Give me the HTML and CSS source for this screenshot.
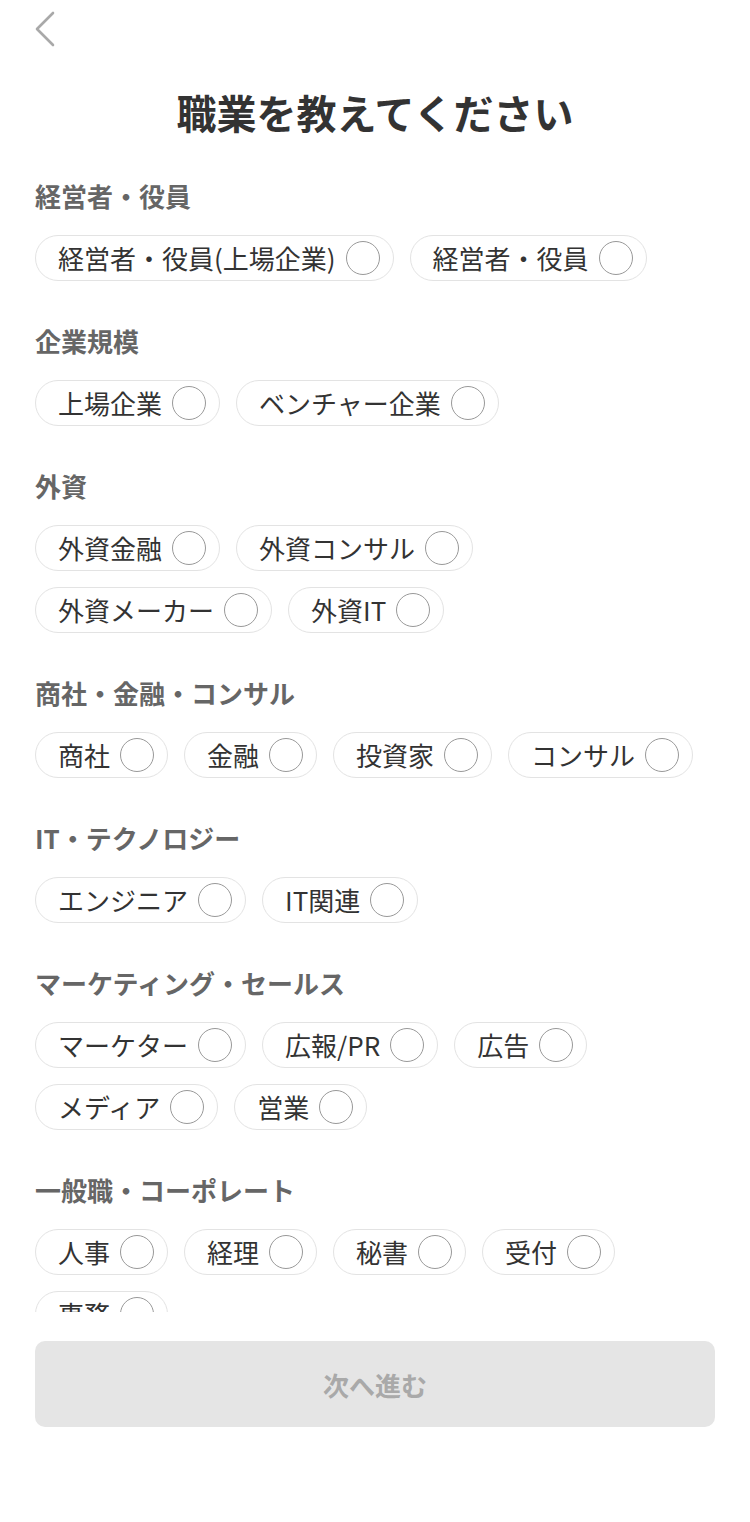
FILE: index.html
```html
<!DOCTYPE html>
<html lang="ja">
<head>
<meta charset="utf-8">
<title>職業を教えてください</title>
<link rel="stylesheet" href="styles.css">
</head>
<body>
<div class="page">
  <header class="topbar">
    <svg class="back" width="24" height="36" viewBox="0 0 24 36" aria-label="戻る">
      <polyline points="19,2 3,18 19,34" fill="none" stroke="#a9a9a9" stroke-width="2.6" stroke-linecap="round" stroke-linejoin="round"/>
    </svg>
  </header>
  <h1 class="title">職業を教えてください</h1>
  <main class="list">
    <section class="group">
      <h2 class="group-title">経営者・役員</h2>
      <div class="chips">
        <label class="chip"><span>経営者・役員(上場企業)</span><i class="radio"></i></label>
        <label class="chip"><span>経営者・役員</span><i class="radio"></i></label>
      </div>
    </section>
    <section class="group">
      <h2 class="group-title">企業規模</h2>
      <div class="chips">
        <label class="chip"><span>上場企業</span><i class="radio"></i></label>
        <label class="chip"><span>ベンチャー企業</span><i class="radio"></i></label>
      </div>
    </section>
    <section class="group">
      <h2 class="group-title">外資</h2>
      <div class="chips">
        <label class="chip"><span>外資金融</span><i class="radio"></i></label>
        <label class="chip"><span>外資コンサル</span><i class="radio"></i></label>
        <label class="chip"><span>外資メーカー</span><i class="radio"></i></label>
        <label class="chip"><span>外資IT</span><i class="radio"></i></label>
      </div>
    </section>
    <section class="group">
      <h2 class="group-title">商社・金融・コンサル</h2>
      <div class="chips">
        <label class="chip"><span>商社</span><i class="radio"></i></label>
        <label class="chip"><span>金融</span><i class="radio"></i></label>
        <label class="chip"><span>投資家</span><i class="radio"></i></label>
        <label class="chip"><span>コンサル</span><i class="radio"></i></label>
      </div>
    </section>
    <section class="group">
      <h2 class="group-title">IT・テクノロジー</h2>
      <div class="chips">
        <label class="chip"><span>エンジニア</span><i class="radio"></i></label>
        <label class="chip"><span>IT関連</span><i class="radio"></i></label>
      </div>
    </section>
    <section class="group">
      <h2 class="group-title">マーケティング・セールス</h2>
      <div class="chips">
        <label class="chip"><span>マーケター</span><i class="radio"></i></label>
        <label class="chip"><span>広報/PR</span><i class="radio"></i></label>
        <label class="chip"><span>広告</span><i class="radio"></i></label>
        <label class="chip"><span>メディア</span><i class="radio"></i></label>
        <label class="chip"><span>営業</span><i class="radio"></i></label>
      </div>
    </section>
    <section class="group">
      <h2 class="group-title">一般職・コーポレート</h2>
      <div class="chips">
        <label class="chip"><span>人事</span><i class="radio"></i></label>
        <label class="chip"><span>経理</span><i class="radio"></i></label>
        <label class="chip"><span>秘書</span><i class="radio"></i></label>
        <label class="chip"><span>受付</span><i class="radio"></i></label>
        <label class="chip"><span>事務</span><i class="radio"></i></label>
      </div>
    </section>
  </main>
  <footer class="footer">
    <button class="next" type="button" disabled>次へ進む</button>
  </footer>
</div>
</body>
</html>
```
FILE: styles.css
```css
* { box-sizing: border-box; }
html, body {
  margin: 0;
  padding: 0;
  background: #ffffff;
}
body {
  font-family: "Noto Sans CJK JP", "Noto Sans", sans-serif;
  color: #333333;
}
.page {
  width: 750px;
  height: 1522px;
  display: flex;
  flex-direction: column;
}
.topbar {
  height: 60px;
  padding: 11px 0 0 34px;
}
.back { display: block; }
.title {
  margin: 0;
  height: 100px;
  padding-top: 24px;
  font-size: 40px;
  line-height: 56px;
  font-weight: 700;
  text-align: center;
  color: #333333;
}
.list {
  height: 1152px;
  overflow: hidden;
  padding: 19px 35px 0 35px;
}
.group { margin-bottom: 43px; }
.group-title {
  margin: 0 0 22px 0;
  font-size: 26px;
  line-height: 34px;
  font-weight: 700;
  color: #666666;
}
.chips {
  display: flex;
  flex-wrap: wrap;
  gap: 16px;
}
.chip {
  height: 46px;
  display: inline-flex;
  align-items: center;
  padding: 0 13px 0 22px;
  border: 1.5px solid #e3e3e3;
  border-radius: 23px;
  font-size: 26px;
  line-height: 1;
  color: #333333;
  background: #ffffff;
}
.radio {
  width: 34px;
  height: 34px;
  margin-left: 10px;
  border: 1.5px solid #999999;
  border-radius: 50%;
  flex: none;
}
.footer {
  padding: 29px 35px 0 35px;
}
.next {
  width: 680px;
  height: 86px;
  border: none;
  border-radius: 10px;
  background: #e5e5e5;
  color: #a9a9a9;
  font-family: "Noto Sans CJK JP", "Noto Sans", sans-serif;
  font-size: 26px;
  font-weight: 700;
}
```
